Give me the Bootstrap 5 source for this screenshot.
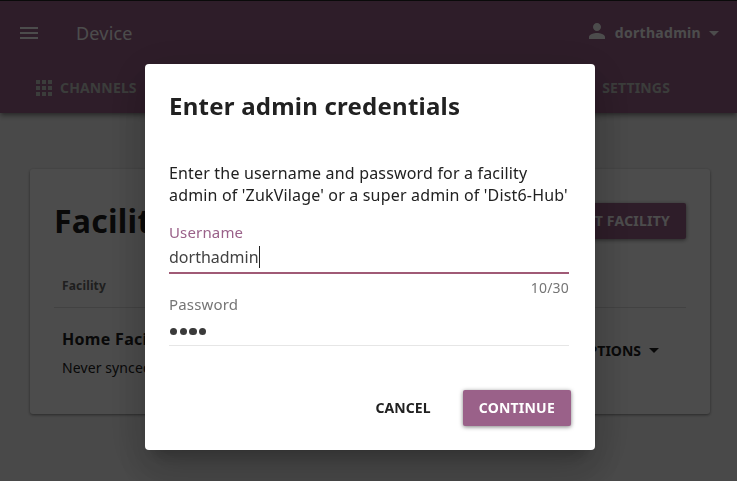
<!DOCTYPE html>
<html lang="en">
<head>
<meta charset="utf-8">
<meta name="viewport" content="width=device-width, initial-scale=1">
<title>Device</title>
<link href="https://cdn.jsdelivr.net/npm/bootstrap@5.3.0/dist/css/bootstrap.min.css" rel="stylesheet">
<style>
  body { font-family: "Noto Sans", sans-serif; background: #f5f5f5; color: #212121; height: 481px; overflow: hidden; font-size: 14px; }
  .app-header { height: 113px; background: #9a6189; color: #fff; border-top: 1px solid #222; box-shadow: 0 2px 4px -1px rgba(0,0,0,.35), 0 4px 5px rgba(0,0,0,.2); }
  .top-row { height: 64px; padding: 0 18px 0 17px; }
  .app-title { font-size: 18px; letter-spacing: .2px; margin-left: 35px; }
  .user-name { margin-left: 6px; margin-right: 8px; font-size: 14px; letter-spacing: .3px; line-height: 20px; }
  .tab-row { height: 46px; padding: 0 67px 1px 36px; color: #c6cbc6; letter-spacing: .15px; }
  .tab-grid { margin-right: 8px; }
  .caret-down { width: 0; height: 0; border: 5px solid transparent; border-top-color: currentColor; border-bottom: 0; }
  .facility-card { margin: 56px 27px 0 30px; height: 245px; padding: 34px 24px 0; border-radius: 3px; background: #fff; box-shadow: 0 1px 3px rgba(0,0,0,.45); }
  .facility-card h1 { font-size: 32px; line-height: 36px; letter-spacing: .25px; }
  .action-btn { height: 36px; padding: 0 16px; font-size: 14px; font-weight: 700; line-height: 36px; letter-spacing: .22px; border: 0; border-radius: 2px; color: #fff; background: #9a6189; box-shadow: 0 1px 4px rgba(0,0,0,.5); }
  .column-head { height: 69px; padding: 37px 8px 0; font-size: 12px; line-height: 20px; letter-spacing: .15px; color: #686868; border-bottom: 1px solid #dedede; }
  .facility-row { padding: 17px 27px 0 8px; }
  .facility-name { font-size: 16px; line-height: 28px; letter-spacing: .3px; }
  .sync-state { line-height: 30px; letter-spacing: .1px; }
  .row-menu { margin-bottom: 8px; }
  .shade { background: rgba(0,0,0,.7); }
  .credentials { width: 450px; max-width: 450px; margin: 64px 0 0 145px; }
  .credentials .modal-content { height: 386px; border: 0; border-radius: 4px; color: #212121; box-shadow: 0 11px 15px -7px rgba(0,0,0,.2), 0 24px 38px 3px rgba(0,0,0,.14), 0 9px 46px 8px rgba(0,0,0,.12); }
  .credentials .modal-header { padding: 26px 24px 0; }
  .credentials h2 { font-size: 24px; line-height: 32px; letter-spacing: .23px; }
  .credentials .modal-body { padding: 40px 26px 0 24px; }
  .intro { font-size: 16px; line-height: 22px; letter-spacing: .17px; margin-bottom: 17px; white-space: nowrap; }
  .field-name { font-size: 15px; line-height: 19px; letter-spacing: .15px; color: #757575; }
  .field-name.active-name { color: #9a6189; }
  .entry { height: 32px; font-size: 16px; color: #424242; border-bottom: 2px solid #a05a76; padding-top: 4px; line-height: 22px; }
  .text-cursor { width: 1px; height: 22px; background: #212121; }
  .entry-secret { height: 32px; border-bottom: 1px solid #e6e6e6; gap: 2.5px; padding: 4px 0 0 1px; }
  .secret-dot { width: 7.2px; height: 7.2px; border-radius: 50%; background: #3a3a3a; }
  .counter { line-height: 20px; letter-spacing: .2px; color: #757575; margin-top: 4px; margin-bottom: -3px; }
  .credentials .modal-footer { padding: 0 24px 24px; }
  .plain-btn { border: 0; padding: 0; font-size: 14px; line-height: 36px; letter-spacing: .1px; font-weight: 700; color: #212121; margin-right: 32px; }
</style>
</head>
<body>
<header class="app-header">
  <div class="top-row d-flex align-items-center">
    <svg width="24" height="24" viewBox="0 0 24 24" fill="currentColor"><path d="M3 18h18v-2H3v2zm0-5h18v-2H3v2zm0-7v2h18V6H3z"/></svg>
    <span class="app-title">Device</span>
    <div class="d-flex align-items-center ms-auto">
      <svg class="mb-1" width="24" height="24" viewBox="0 0 24 24" fill="currentColor"><path d="M12 12c2.21 0 4-1.79 4-4s-1.79-4-4-4-4 1.79-4 4 1.79 4 4 4zm0 2c-2.67 0-8 1.34-8 4v2h16v-2c0-2.66-5.33-4-8-4z"/></svg>
      <span class="user-name fw-bold">dorthadmin</span>
      <span class="caret-down"></span>
    </div>
  </div>
  <nav class="tab-row d-flex align-items-center justify-content-between fw-bold">
    <span class="d-flex align-items-center">
      <svg class="tab-grid" width="16" height="16" viewBox="0 0 16 16" fill="currentColor"><path d="M0 0h4v4H0zM6 0h4v4H6zM12 0h4v4h-4zM0 6h4v4H0zM6 6h4v4H6zM12 6h4v4h-4zM0 12h4v4H0zM6 12h4v4H6zM12 12h4v4h-4z"/></svg>CHANNELS
    </span>
    <span>SETTINGS</span>
  </nav>
</header>

<main class="facility-card">
  <div class="d-flex justify-content-between">
    <h1 class="fw-bold mb-0">Facilities</h1>
    <button class="action-btn">IMPORT FACILITY</button>
  </div>
  <div class="column-head fw-bold">Facility</div>
  <div class="facility-row d-flex justify-content-between">
    <div>
      <div class="facility-name fw-bold">Home Facility</div>
      <div class="sync-state">Never synced</div>
    </div>
    <div class="row-menu d-flex align-items-center fw-bold gap-2">OPTIONS <span class="caret-down"></span></div>
  </div>
</main>

<div class="modal show d-block shade" tabindex="-1">
  <div class="modal-dialog credentials">
    <div class="modal-content">
      <div class="modal-header border-0">
        <h2 class="fw-bold mb-0">Enter admin credentials</h2>
      </div>
      <div class="modal-body">
        <p class="intro">Enter the username and password for a facility<br>admin of 'ZukVilage' or a super admin of 'Dist6-Hub'</p>
        <div class="field-name active-name">Username</div>
        <div class="entry d-flex">dorthadmin<span class="text-cursor"></span></div>
        <div class="counter text-end">10/30</div>
        <div class="field-name">Password</div>
        <div class="entry-secret d-flex align-items-center"><span class="secret-dot"></span><span class="secret-dot"></span><span class="secret-dot"></span><span class="secret-dot"></span></div>
      </div>
      <div class="modal-footer border-0">
        <button class="btn plain-btn my-0 ms-0">CANCEL</button>
        <button class="action-btn m-0">CONTINUE</button>
      </div>
    </div>
  </div>
</div>
<script src="https://cdn.jsdelivr.net/npm/bootstrap@5.3.0/dist/js/bootstrap.bundle.min.js"></script>
</body>
</html>
